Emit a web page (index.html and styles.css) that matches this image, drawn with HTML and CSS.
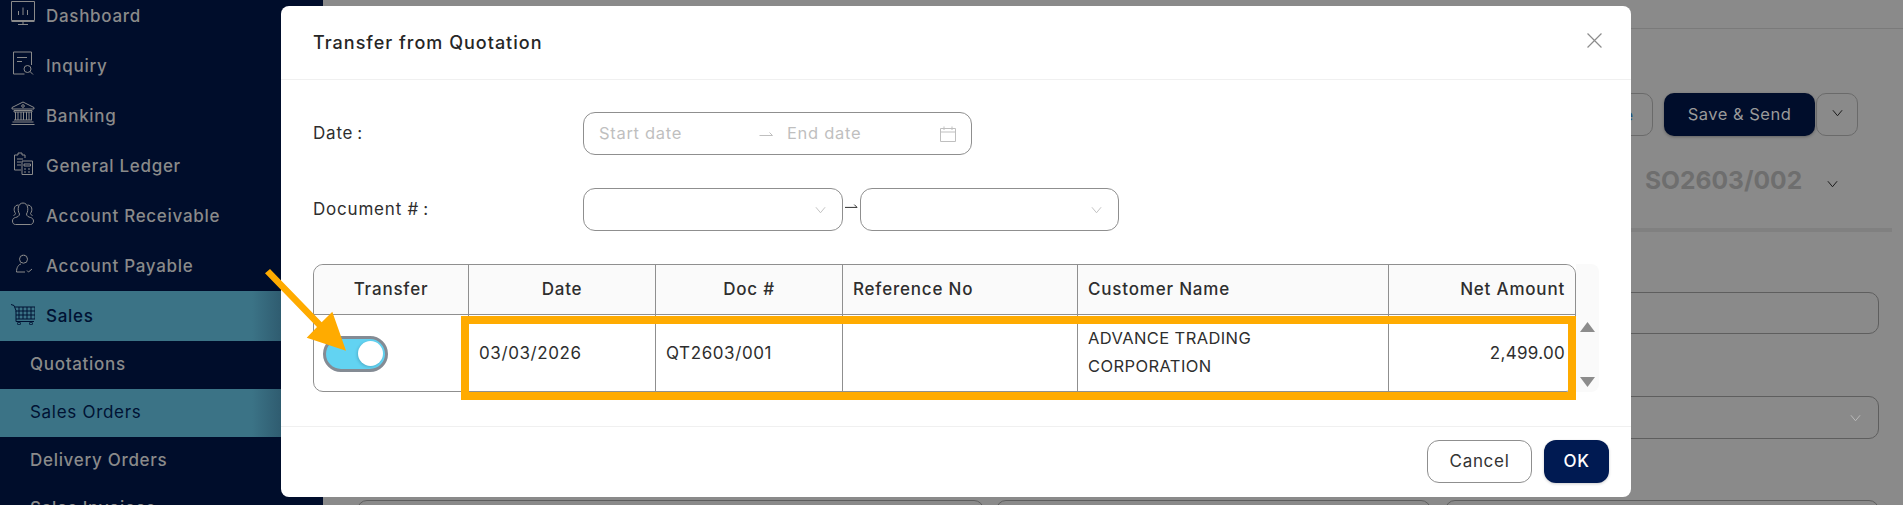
FILE: index.html
```html
<!DOCTYPE html>
<html>
<head>
<meta charset="utf-8">
<title>Transfer from Quotation</title>
<link rel="stylesheet" href="styles.css">
</head>
<body>
<aside class="sidebar">
  <div class="nav-item first">
    <svg class="nav-icon" viewBox="0 0 24 24"><path d="M.5.500h23v19H.5zM.5 20.500h23M12 21v3M7 23.500h10M7.500 14v-4M12 14V6.500M16.500 14V9"/></svg>
    <span>Dashboard</span>
  </div>
  <div class="nav-item">
    <svg class="nav-icon" viewBox="0 0 24 24"><path d="M20.500 14V1H2.500v22h11M6 6.500h10M6 10.500h5"/><circle cx="16.500" cy="18" r="3.500"/><path d="M19 20.500l3 3"/></svg>
    <span>Inquiry</span>
  </div>
  <div class="nav-item">
    <svg class="nav-icon" viewBox="0 0 24 24"><path d="M12 1L1 6.500v1.500h22V6.500zM.5 23.500h23M1.500 21h21M3 9.500h18v1.500H3zM3 19h18M4.500 11v8M7 11v8M10 11v8M12.500 11v8M15.500 11v8M18 11v8M20.500 11v8"/><circle cx="12" cy="5" r="1.300"/></svg>
    <span>Banking</span>
  </div>
  <div class="nav-item">
    <svg class="nav-icon" viewBox="0 0 24 24"><path d="M14 7V4h-3V2H7v2H3.500v15H10M6 8h6M6 11h4M6 14h4"/><path d="M11 10h10.500v13.500H11zM13 13h6.500v2H13zM13 18h2M17 18h2M13 21h2M17 21h2"/></svg>
    <span>General Ledger</span>
  </div>
  <div class="nav-item">
    <svg class="nav-icon" viewBox="0 0 24 24"><path d="M8.500 13C6 9 7 2 12 2s6 7 3.500 11c0 2 2 3 4 3.500s3 2 3 3.500-1 3.500-3 3.500H4.500c-2 0-3-1.500-3-3.500s1-3 3-3.500 4-1.500 4-3.500z"/><path d="M7.500 4C3 4 2 9 4.500 12.500c0 1-1 1.500-2 2M16.500 4c4.500 0 5.500 5 3 8.500 0 1 1 1.500 2 2"/></svg>
    <span>Account Receivable</span>
  </div>
  <div class="nav-item">
    <svg class="nav-icon" viewBox="0 0 24 24"><circle cx="12.500" cy="8.200" r="4"/><path d="M10 13c-2.500.5-4.500 3.500-4.500 8H14M16 19.500l1.500 1.500 3.500-3"/></svg>
    <span>Account Payable</span>
  </div>
  <div class="nav-item active">
    <svg class="nav-icon" viewBox="0 0 24 24"><path d="M0 3.500l3 1 2 5v11h18M4 6h20v12H5M8 6v12M12 6v12M16 6v12M20 6v12M4.500 10h19.500M5 14h19"/><circle cx="8" cy="22.500" r="1.500"/><circle cx="20" cy="22.500" r="1.500"/></svg>
    <span>Sales</span>
  </div>
  <div class="sub-item">Quotations</div>
  <div class="sub-item active">Sales Orders</div>
  <div class="sub-item">Delivery Orders</div>
  <div class="sub-item">Sales Invoices</div>
</aside>

<main class="backdrop-page">
  <div class="page-rule"></div>
  <div class="page-actions">
    <span class="ghost-btn">Save</span>
    <span class="send-btn">Save &amp; Send</span>
    <span class="caret-btn"><svg class="chev dark" viewBox="0 0 12 8"><path d="M1 1l5 6 5-6"/></svg></span>
  </div>
  <div class="doc-no">
    <span>SO2603/002</span>
    <svg class="chev dark" viewBox="0 0 12 8"><path d="M1 1l5 6 5-6"/></svg>
  </div>
  <div class="page-tabline"></div>
  <div class="page-input"></div>
  <div class="page-input select"><svg class="chev faint" viewBox="0 0 12 8"><path d="M1 1l5 6 5-6"/></svg></div>
  <div class="page-bottom">
    <span class="stub a"></span><span class="stub b"></span><span class="stub c"></span>
  </div>
</main>

<section class="modal">
  <header class="modal-head">
    <h2>Transfer from Quotation</h2>
    <svg class="close" viewBox="0 0 14 14"><path d="M.5.500l13 13M13.500.500l-13 13"/></svg>
  </header>
  <div class="modal-body">
    <div class="form-row date-row">
      <label>Date<i>:</i></label>
      <div class="range">
        <span class="ph start">Start date</span>
        <svg class="range-arrow" viewBox="0 0 14 6"><path d="M0 4.500h13L10 1.500"/></svg>
        <span class="ph end">End date</span>
        <svg class="cal" viewBox="0 0 16 16"><path d="M.5 2.500h15v13H.5zM.5 6h15M4 .5v3.500M12 .5v3.500"/></svg>
      </div>
    </div>
    <div class="form-row doc-row">
      <label>Document #<i>:</i></label>
      <div class="selects">
        <div class="sel first-sel"><svg class="chev faint" viewBox="0 0 12 8"><path d="M1 1l5 6 5-6"/></svg></div>
        <svg class="doc-arrow" viewBox="0 0 14 6"><path d="M0 4.500h13L10 1.500"/></svg>
        <div class="sel second-sel"><svg class="chev faint" viewBox="0 0 12 8"><path d="M1 1l5 6 5-6"/></svg></div>
      </div>
    </div>
    <div class="table-wrap">
      <table class="grid">
        <colgroup><col class="c1"><col class="c2"><col class="c3"><col class="c4"><col class="c5"><col class="c6"></colgroup>
        <thead>
          <tr><th>Transfer</th><th>Date</th><th>Doc #</th><th class="left">Reference No</th><th class="left">Customer Name</th><th class="right">Net Amount</th></tr>
        </thead>
        <tbody>
          <tr>
            <td class="toggle-cell"><span class="toggle"><span class="knob"></span></span></td>
            <td>03/03/2026</td>
            <td>QT2603/001</td>
            <td></td>
            <td class="customer">ADVANCE TRADING<br>CORPORATION</td>
            <td class="right">2,499.00</td>
          </tr>
        </tbody>
      </table>
      <div class="scrollbar">
        <svg class="sb-up" viewBox="0 0 15 10"><path d="M7.500 0l7.500 10H0z"/></svg>
        <svg class="sb-down" viewBox="0 0 15 10"><path d="M0 0h15L7.500 10z"/></svg>
      </div>
    </div>
  </div>
  <footer class="modal-foot">
    <span class="btn cancel">Cancel</span>
    <span class="btn ok">OK</span>
  </footer>
</section>

<div class="highlight"></div>
<svg class="arrow" viewBox="0 0 90 90"><path d="M6 1L57.700 54.300L68.300 43.700L82 82.700L42.700 69.700L53 59L1 5.300z"/></svg>
</body>
</html>
```
FILE: styles.css
```css
* { box-sizing: border-box; }
html, body { margin: 0; height: 100%; overflow: hidden; }
body {
  width: 1903px;
  height: 505px;
  position: relative;
  display: flex;
  background: #8a8a8a;
  font-family: Inter, "Liberation Sans", sans-serif;
  color: #262626;
}
.sidebar {
  width: 323px;
  height: 505px;
  overflow: hidden;
  flex: none;
  background: #000d2b;
  color: #8a8a8a;
  font-size: 17px;
  letter-spacing: .7px;
}
.nav-item {
  height: 50px;
  display: flex;
  align-items: center;
  gap: 11px;
  padding-left: 11px;
  font-weight: 500;
}
.nav-item.first { height: 41px; align-items: flex-end; padding-bottom: 15px; }
.nav-item.first .nav-icon { margin-bottom: 1px; }
.nav-icon {
  width: 24px;
  height: 24px;
  flex: none;
  fill: none;
  stroke: #8a8a8a;
  stroke-width: 1;
  margin-top: -6px;
}
.nav-item.active, .sub-item.active {
  background: linear-gradient(90deg, #3b7386 78%, #2f5c70 87%);
  color: #001233;
}
.nav-item.active .nav-icon { stroke: #001233; }
.sub-item {
  height: 48px;
  display: flex;
  align-items: center;
  padding: 0 0 2px 30px;
  font-weight: 500;
}
.sub-item.active { font-weight: 400; }
.backdrop-page {
  flex: 1;
  position: relative;
  height: 505px;
  overflow: hidden;
}
.page-rule {
  position: absolute;
  left: 0; right: 0; top: 28px;
  border-top: 1px solid #7a7a7a;
}
.page-actions {
  position: absolute;
  top: 93px;
  right: 45px;
  display: flex;
  align-items: center;
}
.ghost-btn {
  width: 90px;
  height: 43px;
  margin-right: 11px;
  border: 1px solid #6a6a6a;
  border-radius: 10px;
  display: flex;
  align-items: center;
  justify-content: flex-end;
  padding-right: 19px;
  color: #1a4f80;
  font-size: 16px;
}
.send-btn {
  width: 151px;
  height: 43px;
  margin-right: 1px;
  padding-bottom: 2px;
  background: #000d2b;
  color: #9a9a9a;
  border-radius: 10px;
  display: flex;
  align-items: center;
  justify-content: center;
  font-size: 16.500px;
  letter-spacing: .5px;
  box-shadow: 0 1px 3px rgba(0,0,0,.3);
}
.caret-btn {
  width: 42px;
  height: 43px;
  border: 1px solid #6a6a6a;
  border-radius: 10px;
  display: flex;
  align-items: center;
  justify-content: center;
  padding-bottom: 3px;
}
.chev { width: 11px; height: 8px; fill: none; stroke-width: 1; flex: none; }
.chev.dark { stroke: #111; }
.chev.faint { stroke: #bdbdbd; }
.doc-no {
  position: absolute;
  top: 165px;
  left: 1322px;
  display: flex;
  align-items: center;
  gap: 25px;
  font-size: 24.600px;
  font-weight: 700;
  color: #6e6e6e;
}
.doc-no .chev { margin-top: 8px; }
.page-tabline {
  position: absolute;
  top: 228px;
  left: 1280px;
  right: 11px;
  height: 4px;
  background: #808080;
}
.page-input {
  position: absolute;
  top: 292px;
  left: 1280px;
  right: 24px;
  height: 42px;
  border: 1px solid #5e5e5e;
  border-radius: 10px;
}
.page-input.select {
  top: 396px;
  height: 43px;
  display: flex;
  align-items: center;
  justify-content: flex-end;
  padding-right: 17px;
}
.page-bottom { position: absolute; top: 500px; left: 34px; display: flex; height: 5px; overflow: hidden; }
.stub { display: block; height: 20px; border: 1px solid #5e5e5e; border-radius: 10px; }
.stub.a { width: 627px; margin-right: 12px; }
.stub.b { width: 435px; margin-right: 14px; }
.stub.c { width: 434px; }
.modal {
  position: absolute;
  left: 281px;
  top: 6px;
  width: 1350px;
  height: 491px;
  background: #fff;
  border-radius: 8px;
  display: flex;
  flex-direction: column;
}
.modal-head {
  height: 74px;
  flex: none;
  border-bottom: 1px solid #f0f0f0;
  display: flex;
  align-items: center;
  justify-content: space-between;
  padding: 0 29px 0 32px;
}
.modal-head h2 {
  margin: 0;
  font-size: 18px;
  font-weight: 500;
  letter-spacing: 1px;
  color: #262626;
}
.close { width: 15px; height: 15px; fill: none; stroke: #8c8c8c; stroke-width: 1.100; margin-top: -5px; }
.modal-body { flex: 1; padding: 32px 32px 0; }
.form-row { display: flex; align-items: center; }
.form-row label {
  width: 270px;
  padding-bottom: 2px;
  font-size: 17px;
  letter-spacing: .8px;
  color: #2e2e2e;
}
.form-row label i { font-style: normal; margin-left: 4px; }
.date-row { height: 43px; margin-bottom: 33px; }
.range {
  width: 389px;
  height: 43px;
  border: 1px solid #8f8f8f;
  border-radius: 12px;
  display: flex;
  align-items: center;
  padding: 0 15px;
}
.ph { color: #bfbfbf; font-size: 16.500px; letter-spacing: .7px; padding-bottom: 2px; }
.ph.start { width: 160px; }
.range-arrow { width: 15px; height: 6px; fill: none; stroke: #bfbfbf; stroke-width: 1; }
.ph.end { margin-left: 13px; flex: 1; }
.cal { width: 16px; height: 16px; fill: none; stroke: #bfbfbf; stroke-width: 1; }
.doc-row { height: 43px; margin-bottom: 33px; }
.selects { display: flex; align-items: center; }
.sel {
  height: 43px;
  border: 1px solid #8f8f8f;
  border-radius: 12px;
  display: flex;
  align-items: center;
  justify-content: flex-end;
  padding-right: 16px;
}
.first-sel { width: 260px; }
.second-sel { width: 259px; }
.doc-arrow { width: 13px; height: 6px; margin: -8px 2px 0 2px; fill: none; stroke: #222; stroke-width: 1; flex: none; }
.table-wrap { display: flex; }
.grid {
  width: 1263px;
  table-layout: fixed;
  border-collapse: separate;
  border-spacing: 0;
  border: 1px solid #8f8f8f;
  border-radius: 10px;
  font-size: 17px;
  letter-spacing: .6px;
  color: #2e2e2e;
}
.c1 { width: 155px; }
.c2 { width: 187px; }
.c3 { width: 187px; }
.c4 { width: 235px; }
.c5 { width: 311px; }
.grid th {
  height: 50px;
  background: #fafafa;
  font-weight: 500;
  letter-spacing: .8px;
  border-right: 1px solid #8f8f8f;
  border-bottom: 1px solid #8f8f8f;
  padding: 0 10px 2px;
  text-align: center;
  white-space: nowrap;
}
.grid th:first-child { border-top-left-radius: 10px; }
.grid th:last-child { border-top-right-radius: 10px; border-right: none; }
.grid th.left { text-align: left; }
.grid th.right { text-align: right; }
.grid td {
  height: 76px;
  border-right: 1px solid #8f8f8f;
  padding: 0 10px;
  vertical-align: middle;
}
.grid td:last-child { border-right: none; }
.grid td.right { text-align: right; letter-spacing: .3px; }
.grid td.customer { line-height: 28px; font-size: 16.500px; letter-spacing: .4px; padding-bottom: 2px; }
.grid td.toggle-cell { padding: 0 9px; }
.toggle {
  display: block;
  width: 65px;
  height: 36px;
  margin-top: 1px;
  background: #62d3f2;
  border: 3px solid #848b94;
  border-radius: 18px;
  position: relative;
}
.knob {
  position: absolute;
  right: 2.500px;
  top: 2.500px;
  width: 25px;
  height: 25px;
  background: #fff;
  border-radius: 50%;
  box-shadow: -1px 1px 3px rgba(0,40,60,.2);
}
.scrollbar {
  width: 23px;
  background: #fafafa;
  border-radius: 0 8px 8px 0;
  display: flex;
  flex-direction: column;
  align-items: center;
  padding-top: 58px;
  gap: 45px;
}
.scrollbar svg { width: 15px; height: 10px; fill: #8c8c8c; flex: none; }
.modal-foot {
  height: 71px;
  flex: none;
  border-top: 1px solid #f0f0f0;
  display: flex;
  justify-content: flex-end;
  align-items: center;
  gap: 12px;
  padding: 0 22px 2px 0;
}
.btn {
  height: 43px;
  border-radius: 12px;
  display: flex;
  align-items: center;
  justify-content: center;
  font-size: 17px;
  letter-spacing: .7px;
  padding-bottom: 1px;
}
.cancel { width: 105px; border: 1px solid #8f8f8f; color: #333; }
.ok { width: 65px; background: #001a52; color: #fff; font-weight: 500; box-shadow: 0 1px 3px rgba(0,0,0,.2); }
.highlight {
  position: absolute;
  left: 461px;
  top: 316px;
  width: 1115px;
  height: 84px;
  border: 8px solid #ffab00;
}
.arrow {
  position: absolute;
  left: 264px;
  top: 268px;
  width: 90px;
  height: 90px;
  fill: #ffab00;
}
```
